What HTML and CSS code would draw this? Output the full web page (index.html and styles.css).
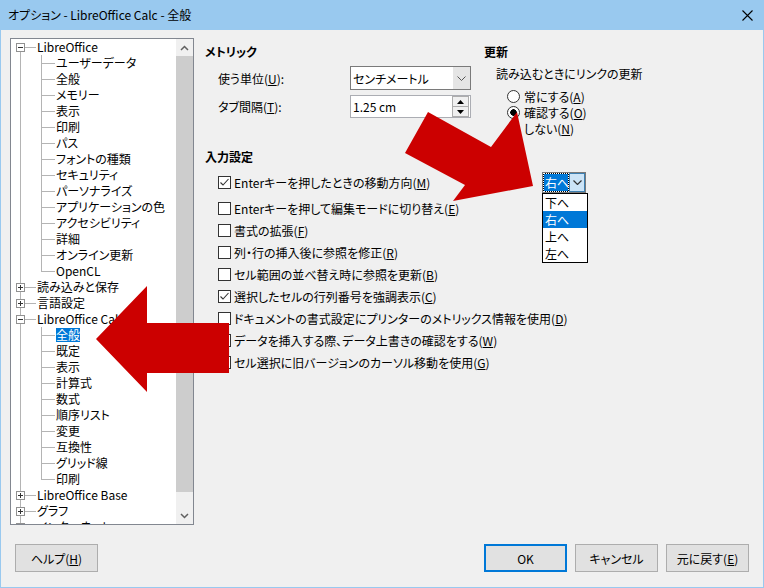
FILE: index.html
```html
<!DOCTYPE html>
<html lang="ja">
<head>
<meta charset="UTF-8">
<title>オプション - LibreOffice Calc - 全般</title>
<link rel="stylesheet" href="styles.css">
</head>
<body>
<div class="window">
  <div class="titlebar">
    <span class="title">オプション - LibreOffice Calc - 全般</span>
    <svg class="close" width="11" height="11" viewBox="0 0 11 11"><path d="M0.5 0.5L10.5 10.5M10.5 0.5L0.5 10.5" stroke="#000" stroke-width="1.1"/></svg>
  </div>
  <div class="content">
    <div class="main">
      <!-- category tree -->
      <div class="tree">
        <div class="tree-list">
          <div class="node"><span class="exp minus"></span><span class="link"></span>LibreOffice</div>
          <div class="group">
            <div class="leaf">ユーザーデータ</div>
            <div class="leaf">全般</div>
            <div class="leaf">メモリー</div>
            <div class="leaf">表示</div>
            <div class="leaf">印刷</div>
            <div class="leaf">パス</div>
            <div class="leaf">フォントの種類</div>
            <div class="leaf">セキュリティ</div>
            <div class="leaf">パーソナライズ</div>
            <div class="leaf">アプリケーションの色</div>
            <div class="leaf">アクセシビリティ</div>
            <div class="leaf">詳細</div>
            <div class="leaf">オンライン更新</div>
            <div class="leaf">OpenCL</div>
          </div>
          <div class="node"><span class="exp plus"></span><span class="link"></span>読み込みと保存</div>
          <div class="node"><span class="exp plus"></span><span class="link"></span>言語設定</div>
          <div class="node"><span class="exp minus"></span><span class="link"></span>LibreOffice Calc</div>
          <div class="group">
            <div class="leaf"><span class="sel">全般</span></div>
            <div class="leaf">既定</div>
            <div class="leaf">表示</div>
            <div class="leaf">計算式</div>
            <div class="leaf">数式</div>
            <div class="leaf">順序リスト</div>
            <div class="leaf">変更</div>
            <div class="leaf">互換性</div>
            <div class="leaf">グリッド線</div>
            <div class="leaf">印刷</div>
          </div>
          <div class="node"><span class="exp plus"></span><span class="link"></span>LibreOffice Base</div>
          <div class="node"><span class="exp plus"></span><span class="link"></span>グラフ</div>
          <div class="node"><span class="exp plus"></span><span class="link"></span>インターネット</div>
        </div>
        <div class="vscroll">
          <div class="sb-btn"><svg width="9" height="6" viewBox="0 0 9 6"><path d="M1 5L4.5 1.5L8 5" fill="none" stroke="#606060" stroke-width="1.5"/></svg></div>
          <div class="thumb"></div>
          <div class="track"></div>
          <div class="sb-btn"><svg width="9" height="6" viewBox="0 0 9 6"><path d="M1 1L4.5 4.5L8 1" fill="none" stroke="#606060" stroke-width="1.5"/></svg></div>
        </div>
      </div>

      <!-- settings page -->
      <div class="pane">
        <div class="top-row">
          <section class="metric">
            <h3>メトリック</h3>
            <div class="field">
              <label>使う単位(<u>U</u>):</label>
              <div class="select">
                <span class="value">センチメートル</span>
                <span class="drop"><svg width="9" height="5" viewBox="0 0 9 5"><path d="M0.5 0.5L4.5 4.5L8.5 0.5" fill="none" stroke="#555" stroke-width="1"/></svg></span>
              </div>
            </div>
            <div class="field spin-field">
              <label>タブ間隔(<u>T</u>):</label>
              <div class="spin">
                <span class="value">1.25 cm</span>
                <span class="spin-btns">
                  <span class="spin-btn"><svg width="7" height="4" viewBox="0 0 7 4"><path d="M0 4L3.5 0L7 4Z" fill="#000"/></svg></span>
                  <span class="spin-btn"><svg width="7" height="4" viewBox="0 0 7 4"><path d="M0 0L3.5 4L7 0Z" fill="#000"/></svg></span>
                </span>
              </div>
            </div>
          </section>
          <section class="update">
            <h3>更新</h3>
            <p class="sub">読み込むときにリンクの更新</p>
            <div class="radios">
              <div class="radio"><span class="circle"></span>常にする(<u>A</u>)</div>
              <div class="radio"><span class="circle on"></span>確認する(<u>O</u>)</div>
              <div class="radio"><span class="circle"></span>しない(<u>N</u>)</div>
            </div>
          </section>
        </div>

        <section class="input">
          <h3>入力設定</h3>
          <div class="checks">
            <div class="check first">
              <div class="check-line"><span class="cb on"></span>Enterキーを押したときの移動方向(<u>M</u>)</div>
              <div class="combo">
                <span class="combo-val">右へ</span>
                <span class="combo-btn"><svg width="9" height="5" viewBox="0 0 9 5"><path d="M0.5 0.5L4.5 4.5L8.5 0.5" fill="none" stroke="#333" stroke-width="1.2"/></svg></span>
                <ul class="combo-list">
                  <li>下へ</li>
                  <li class="active">右へ</li>
                  <li>上へ</li>
                  <li>左へ</li>
                </ul>
              </div>
            </div>
            <div class="check second"><span class="cb"></span>Enterキーを押して編集モードに切り替え(<u>E</u>)</div>
            <div class="check"><span class="cb"></span>書式の拡張(<u>F</u>)</div>
            <div class="check"><span class="cb"></span>列・行の挿入後に参照を修正(<u>R</u>)</div>
            <div class="check"><span class="cb"></span>セル範囲の並べ替え時に参照を更新(<u>B</u>)</div>
            <div class="check"><span class="cb on"></span>選択したセルの行列番号を強調表示(<u>C</u>)</div>
            <div class="check"><span class="cb"></span>ドキュメントの書式設定にプリンターのメトリックス情報を使用(<u>D</u>)</div>
            <div class="check"><span class="cb"></span>データを挿入する際、データ上書きの確認をする(<u>W</u>)</div>
            <div class="check"><span class="cb"></span>セル選択に旧バージョンのカーソル移動を使用(<u>G</u>)</div>
          </div>
        </section>
      </div>
    </div>

    <div class="buttons">
      <button class="btn">ヘルプ(<u>H</u>)</button>
      <button class="btn default">OK</button>
      <button class="btn">キャンセル</button>
      <button class="btn">元に戻す(<u>E</u>)</button>
    </div>
  </div>
</div>

<!-- red annotation arrows over the dialog -->
<svg class="arrows" width="764" height="588" viewBox="0 0 764 588">
  <polygon points="96,339 147,286 147,323 229,323 229,373 147,373 147,392" fill="#cc0000"/>
  <polygon points="428,112 491,147 517,112 533,186 453,201 465,185 405,153" fill="#cc0000"/>
</svg>
</body>
</html>
```

FILE: styles.css
```css
* {
    box-sizing: border-box;
}
body {
    margin: 0;
    font-family: "Segoe UI", "Noto Sans CJK JP", sans-serif;
    font-size: 12px;
    font-feature-settings: "palt";
    color: #000;
    background: #fff;
}
u {
    text-underline-offset: 1px;
}
.window {
    width: 764px;
    height: 588px;
    border: 1px solid #99c9ef;
    background: #f0f0f0;
    display: flex;
    flex-direction: column;
}
.titlebar {
    height: 30px;
    background: #99c9ef;
    display: flex;
    align-items: center;
    justify-content: space-between;
    padding: 0 10px 0 7px;
    margin-top: -1px;
}
.title {
    line-height: 16px;
}
.content {
    flex: 1;
    padding: 8px 0 0 9px;
    display: flex;
    flex-direction: column;
}
.main {
    display: flex;
    height: 487px;
}

/* tree */
.tree {
    width: 184px;
    height: 487px;
    border: 1px solid #828790;
    background: #fff;
    display: flex;
}
.tree-list {
    flex: 1;
    overflow: hidden;
    line-height: 16px;
    white-space: nowrap;
    background: linear-gradient(#b4b4b4, #b4b4b4) 9px 8px / 1px 100% no-repeat;
}
.node {
    height: 16px;
    display: flex;
    align-items: center;
    padding-left: 5px;
}
.exp {
    width: 9px;
    height: 9px;
    border: 1px solid #919191;
    background-color: #fff;
}
.exp.minus {
    background: linear-gradient(#333, #333) center / 5px 1px no-repeat, #fff;
}
.exp.plus {
    background: linear-gradient(#333, #333) center / 5px 1px no-repeat,
                linear-gradient(#333, #333) center / 1px 5px no-repeat, #fff;
}
.link {
    width: 11px;
    height: 1px;
    margin-right: 1px;
    background: #b4b4b4;
}
.group {
    background: linear-gradient(#b4b4b4, #b4b4b4) 30px 0 / 1px calc(100% - 8px) no-repeat;
}
.leaf {
    height: 16px;
    padding-left: 45px;
    background: linear-gradient(#b4b4b4, #b4b4b4) 30px 8px / 14px 1px no-repeat;
}
.sel {
    display: inline-block;
    line-height: 14px;
    background: #0078d7;
    color: #fff;
}
.vscroll {
    width: 17px;
    background: #f0f0f0;
    display: flex;
    flex-direction: column;
}
.sb-btn {
    height: 17px;
    display: flex;
    align-items: center;
    justify-content: center;
}
.thumb {
    height: 436px;
    background: #cdcdcd;
}
.track {
    flex: 1;
}

/* right side */
.pane {
    flex: 1;
    padding: 6px 0 0 11px;
}
h3 {
    margin: 0;
    font-size: 12px;
    font-weight: bold;
    line-height: 16px;
}
.top-row {
    display: flex;
    align-items: flex-start;
}
.metric {
    width: 279px;
}
.field {
    display: flex;
    align-items: center;
    padding-left: 13px;
    margin-top: 6px;
}
.spin-field {
    margin-top: 5px;
}
.field label {
    width: 132px;
}
.select, .spin {
    width: 121px;
    background: #fff;
    display: flex;
    align-items: center;
    padding-left: 2px;
}
.select {
    height: 24px;
    border: 1px solid #7a7a7a;
}
.spin {
    height: 23px;
    border: 1px solid #abadb3;
}
.value {
    flex: 1;
}
.drop {
    width: 17px;
    height: 22px;
    background: #e5e5e5;
    display: flex;
    align-items: center;
    justify-content: center;
}
.spin-btns {
    width: 17px;
    height: 21px;
    display: flex;
    flex-direction: column;
    margin-right: 1px;
}
.spin-btn {
    flex: 1;
    border: 1px solid #adadad;
    background: #f0f0f0;
    display: flex;
    align-items: center;
    justify-content: center;
}
.spin-btn + .spin-btn {
    border-top: none;
}
.sub {
    margin: 6px 0 0 12px;
    line-height: 16px;
}
.radios {
    margin-top: 6px;
    padding-left: 23px;
}
.radio {
    height: 16px;
    display: flex;
    align-items: center;
}
.circle {
    width: 13px;
    height: 13px;
    border: 1px solid #333;
    border-radius: 50%;
    background: #fff;
    margin-right: 4px;
}
.circle.on {
    background: radial-gradient(circle, #000 0 3px, #fff 3.5px);
}

.input {
    margin-top: 13px;
}
.checks {
    padding-left: 13px;
    margin-top: 6px;
}
.check, .check-line {
    height: 22px;
    display: flex;
    align-items: center;
    white-space: nowrap;
}
.check.second {
    margin-top: 4px;
}
.check-line {
    width: 324px;
}
.cb {
    width: 13px;
    height: 13px;
    border: 1px solid #333;
    background: #fff;
    margin-right: 3px;
}
.cb.on {
    background: #fff url("data:image/svg+xml;utf8,<svg xmlns='http://www.w3.org/2000/svg' width='11' height='11'><path d='M1.5 5.5L4 8L9.5 2' fill='none' stroke='%23333' stroke-width='1.1'/></svg>") center no-repeat;
}

/* open combo popup */
.combo {
    position: relative;
    width: 44px;
    height: 21px;
    border: 1px solid #7a7a7a;
    display: flex;
    background: #fff;
}
.combo-val {
    width: 26px;
    padding-left: 1px;
    line-height: 17px;
    color: #fff;
    border: 1px dotted #fff;
    background: linear-gradient(#0078d7, #0078d7) padding-box, linear-gradient(#000, #000) border-box;
}
.combo-btn {
    flex: 1;
    background: #cce4f7;
    border: 1px solid #3c7fb1;
    display: flex;
    align-items: center;
    justify-content: center;
}
.combo-list {
    position: absolute;
    left: -1px;
    top: 20px;
    width: 46px;
    margin: 0;
    padding: 0;
    list-style: none;
    border: 1px solid #000;
    background: #fff;
}
.combo-list li {
    height: 17px;
    line-height: 17px;
    padding-left: 2px;
}
.combo-list li.active {
    background: #0078d7;
    color: #fff;
}

/* bottom buttons */
.buttons {
    display: flex;
    gap: 8px;
    margin-top: 19px;
    padding: 0 14px 0 5px;
}
.btn {
    width: 83px;
    height: 28px;
    font: inherit;
    color: #000;
    background: #e1e1e1;
    border: 1px solid #adadad;
    padding: 0;
}
.btn.default {
    margin-left: auto;
    border: 2px solid #0078d7;
}

.arrows {
    position: absolute;
    left: 0;
    top: 0;
    pointer-events: none;
}
```
